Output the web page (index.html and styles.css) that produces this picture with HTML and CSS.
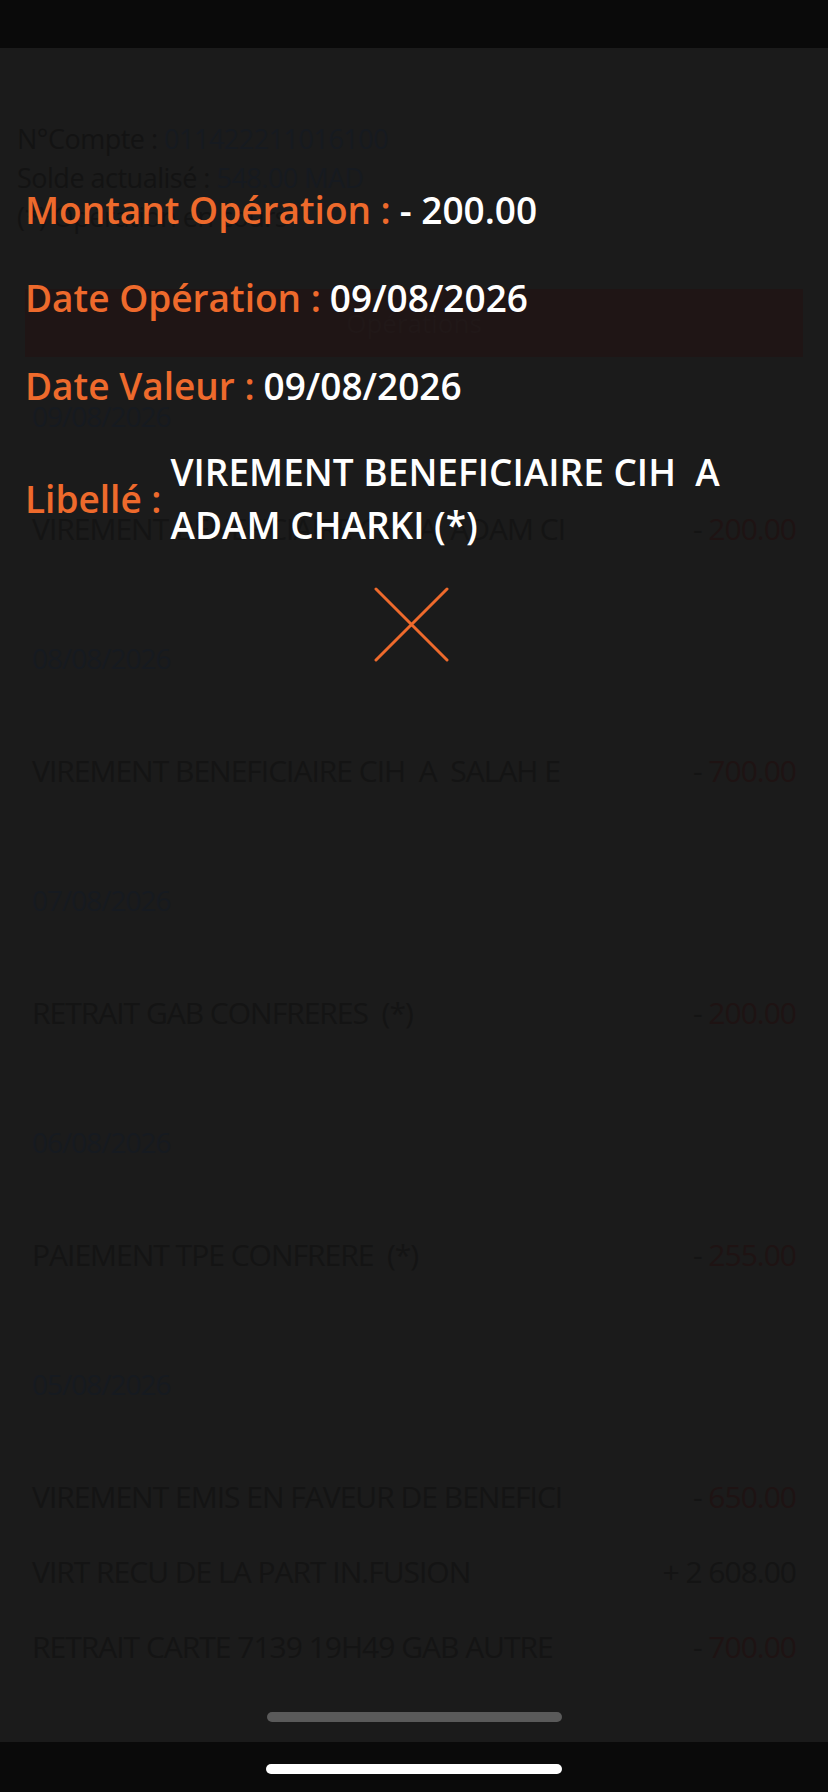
FILE: index.html
```html
<!DOCTYPE html>
<html lang="fr">
<head>
    <meta charset="UTF-8">
    <meta name="viewport" content="width=device-width, initial-scale=1.0">
    <link rel="stylesheet" href="styles.css">
</head>
<body>

<div class="status-bar"></div>

<div class="page">
    <div class="account">
        <p>N°Compte : <span class="account-value">011422211016100</span></p>
        <p>Solde actualisé : <span class="account-value">548.00 MAD</span></p>
        <p>(*) Opération en cours</p>
    </div>

    <div class="btn-ops">Opérations</div>

    <div class="day">
        <div class="day-date">09/08/2026</div>
        <div class="op"><span>VIREMENT BENEFICIAIRE CIH  A  ADAM CI</span><span class="amount">- <b>200.00</b></span></div>
    </div>
    <div class="day">
        <div class="day-date">08/08/2026</div>
        <div class="op"><span>VIREMENT BENEFICIAIRE CIH  A  SALAH E</span><span class="amount">- <b>700.00</b></span></div>
    </div>
    <div class="day">
        <div class="day-date">07/08/2026</div>
        <div class="op"><span>RETRAIT GAB CONFRERES  (*)</span><span class="amount">- <b>200.00</b></span></div>
    </div>
    <div class="day">
        <div class="day-date">06/08/2026</div>
        <div class="op"><span>PAIEMENT TPE CONFRERE  (*)</span><span class="amount">- <b>255.00</b></span></div>
    </div>
    <div class="day day-last">
        <div class="day-date">05/08/2026</div>
        <div class="op"><span>VIREMENT EMIS EN FAVEUR DE BENEFICI</span><span class="amount">- <b>650.00</b></span></div>
        <div class="op"><span>VIRT RECU DE LA PART IN.FUSION</span><span class="amount credit">+ 2 608.00</span></div>
        <div class="op"><span>RETRAIT CARTE 7139 19H49 GAB AUTRE</span><span class="amount">- <b>700.00</b></span></div>
    </div>

    <div class="scroll-pill"></div>
</div>

<div class="home-bar">
    <div class="home-indicator"></div>
</div>

<!-- detail popup over the list -->
<div class="detail">
    <div class="detail-row">
        <span class="label">Montant Opération :</span>
        <span class="value">- 200.00</span>
    </div>
    <div class="detail-row">
        <span class="label">Date Opération :</span>
        <span class="value">09/08/2026</span>
    </div>
    <div class="detail-row">
        <span class="label">Date Valeur :</span>
        <span class="value">09/08/2026</span>
    </div>
    <div class="detail-row detail-libelle">
        <span class="label">Libellé :</span>
        <span class="value libelle-text">VIREMENT BENEFICIAIRE CIH&nbsp; A ADAM CHARKI (*)</span>
    </div>
    <button class="close-btn" aria-label="Fermer">
        <svg width="75" height="75" viewBox="0 0 75 75">
            <path d="M2 2 L73 73 M73 2 L2 73" stroke="#ee6a2c" stroke-width="3" stroke-linecap="round" fill="none"/>
        </svg>
    </button>
</div>

</body>
</html>
```

FILE: styles.css
```css
* {
    box-sizing: border-box;
}

body {
    margin: 0;
    background-color: #1b1b1b;
    font-family: "Open Sans", "Noto Sans", sans-serif;
    position: relative;
    min-height: 1792px;
}

.status-bar {
    height: 48px;
    background-color: #0a0a0a;
}

.page {
    padding: 71px 0 0;
    height: 1694px;
    display: flex;
    flex-direction: column;
}

.page > * {
    flex-shrink: 0;
}

/* dimmed page under the popup */
.account {
    padding: 0 17px;
    font-size: 27px;
    letter-spacing: -0.5px;
    color: #131313;
}

.account p {
    margin: 0;
    line-height: 39px;
}

.account-value {
    color: #161a20;
}

.btn-ops {
    margin: 53px 25px 39px;
    height: 68px;
    background-color: #1f1515;
    color: #211818;
    font-size: 26px;
    display: flex;
    align-items: center;
    justify-content: center;
}

.day {
    margin-bottom: 72px;
}

.day.day-last {
    margin-bottom: 0;
}

.day-date {
    padding: 0 32px;
    height: 40px;
    line-height: 40px;
    font-size: 28px;
    letter-spacing: -1px;
    color: #161a20;
    margin-bottom: 55px;
}

.op {
    height: 75px;
    padding: 0 32px;
    display: flex;
    justify-content: space-between;
    align-items: center;
    font-size: 30px;
    letter-spacing: -1px;
    color: #141414;
    white-space: pre;
}

.amount b {
    font-weight: normal;
    color: #1e1313;
}

.amount.credit {
    color: #141414;
}

.scroll-pill {
    margin: auto auto 20px;
    width: 295px;
    height: 10px;
    border-radius: 5px;
    background-color: #5a5a5a;
}

.home-bar {
    height: 50px;
    background-color: #0a0a0a;
    display: flex;
    justify-content: center;
    padding-top: 22px;
}

.home-indicator {
    width: 296px;
    height: 10px;
    border-radius: 5px;
    background-color: #fff;
}

/* popup */
.detail {
    position: absolute;
    top: 0;
    left: 0;
    right: 0;
    padding: 165px 25px 0;
    display: flex;
    flex-direction: column;
}

.detail-row {
    height: 88px;
    display: flex;
    align-items: center;
    font-size: 37px;
    font-weight: 600;
}

.label {
    color: #ee6a2c;
    margin-right: 9px;
}

.value {
    color: #fff;
}

.detail-libelle {
    height: auto;
    margin-top: 16px;
}

.libelle-text {
    width: 600px;
    line-height: 53px;
}

.close-btn {
    align-self: center;
    margin: 36px 0 0 -6px;
    padding: 0;
    border: none;
    background: none;
    width: 75px;
    height: 75px;
}

.close-btn svg {
    display: block;
}
```
